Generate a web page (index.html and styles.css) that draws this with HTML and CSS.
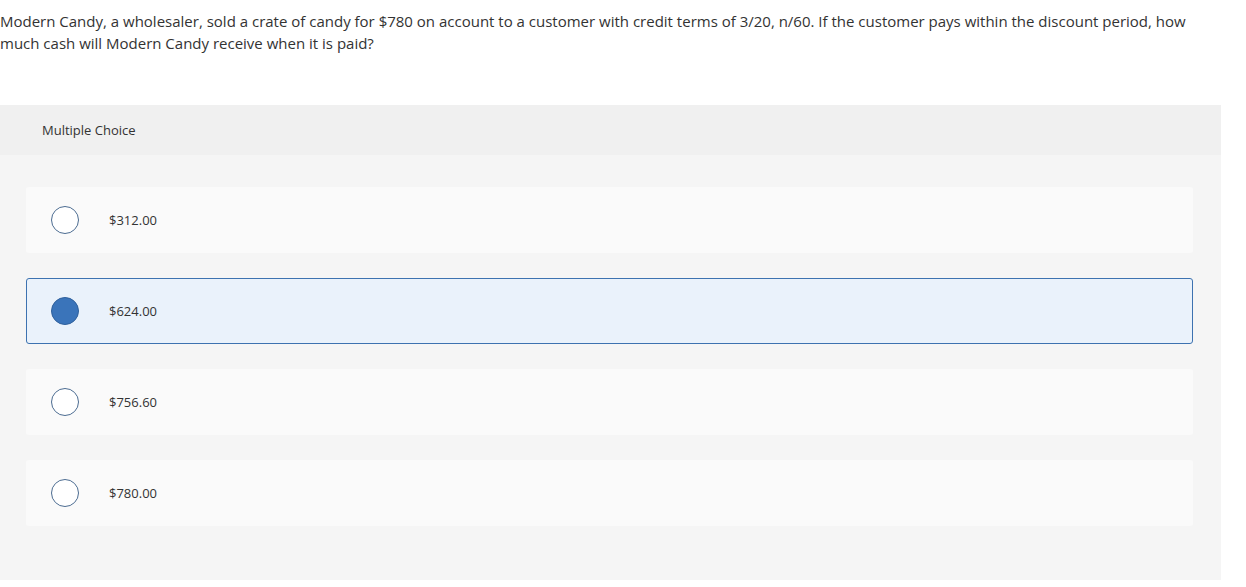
FILE: index.html
```html
<!DOCTYPE html>
<html lang="en">
<head>
<meta charset="utf-8">
<title>Multiple Choice</title>
<link rel="stylesheet" href="styles.css">
</head>
<body>
<div class="page">
  <p class="question">Modern Candy, a wholesaler, sold a crate of candy for $780 on account to a customer with credit terms of 3/20, n/60. If the customer pays within the discount period, how much cash will Modern Candy receive when it is paid?</p>
  <section class="panel">
    <header class="panel-head">Multiple Choice</header>
    <div class="panel-body">
      <div class="option"><span class="radio"></span><span class="label">$312.00</span></div>
      <div class="option selected"><span class="radio"></span><span class="label">$624.00</span></div>
      <div class="option"><span class="radio"></span><span class="label">$756.60</span></div>
      <div class="option"><span class="radio"></span><span class="label">$780.00</span></div>
    </div>
  </section>
</div>
</body>
</html>
```
FILE: styles.css
```css
html, body {
  margin: 0;
  padding: 0;
  background: #ffffff;
}
.page {
  font-family: "Open Sans", "Liberation Sans", sans-serif;
  color: #333333;
}
.question {
  margin: 10px 0 0 0;
  width: 1221px;
  font-size: 15px;
  line-height: 22px;
}
.panel {
  margin-top: 51px;
  width: 1221px;
  background: #f5f5f5;
}
.panel-head {
  height: 50px;
  display: flex;
  align-items: center;
  padding-left: 42px;
  background: #f0f0f0;
  font-size: 13px;
  color: #333333;
}
.panel-body {
  display: flex;
  flex-direction: column;
  gap: 25px;
  padding: 32px 28px 54px 26px;
}
.option {
  height: 66px;
  box-sizing: border-box;
  display: flex;
  align-items: center;
  gap: 30px;
  padding-left: 25px;
  background: #fafafa;
  border-radius: 3px;
  font-size: 13px;
  color: #333333;
}
.radio {
  width: 28px;
  height: 28px;
  box-sizing: border-box;
  border-radius: 50%;
  border: 1.5px solid #4c6c91;
  background: #ffffff;
  flex: none;
}
.option.selected {
  background: #eaf2fb;
  border: 1px solid #3d72b0;
  padding-left: 24px;
}
.option.selected .radio {
  background: #3a74ba;
  border-color: #2f609c;
}
```
